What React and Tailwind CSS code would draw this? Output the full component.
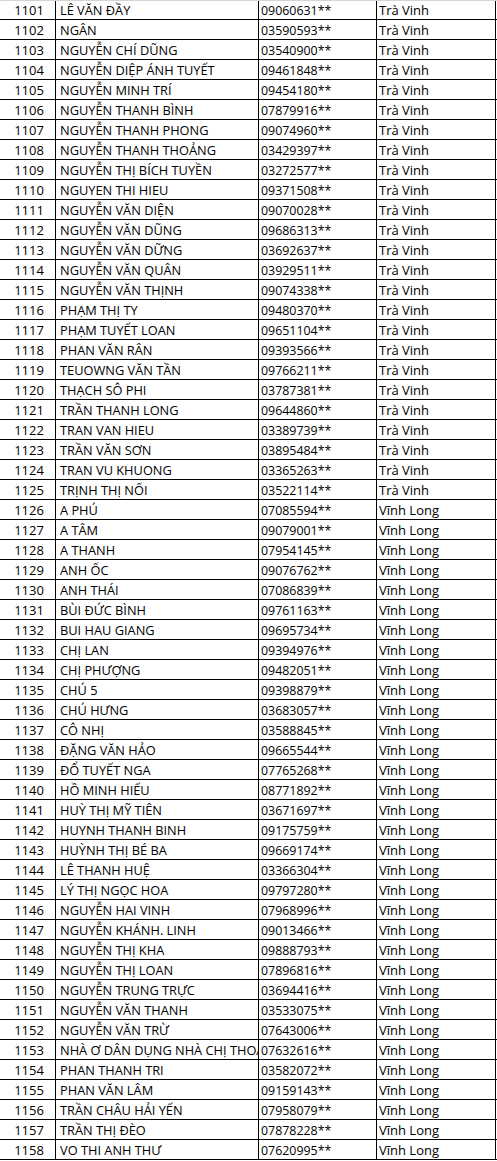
import React from "react";

const raw = `1101|LÊ VĂN ĐẦY|09060631
1102|NGÂN|03590593
1103|NGUYỄN CHÍ DŨNG|03540900
1104|NGUYỄN DIỆP ÁNH TUYẾT|09461848
1105|NGUYỄN MINH TRÍ|09454180
1106|NGUYỄN THANH BÌNH|07879916
1107|NGUYỄN THANH PHONG|09074960
1108|NGUYỄN THANH THOẢNG|03429397
1109|NGUYỄN THỊ BÍCH TUYỀN|03272577
1110|NGUYEN THI HIEU|09371508
1111|NGUYỄN VĂN DIỆN|09070028
1112|NGUYỄN VĂN DŨNG|09686313
1113|NGUYỄN VĂN DỮNG|03692637
1114|NGUYỄN VĂN QUÂN|03929511
1115|NGUYỄN VĂN THỊNH|09074338
1116|PHẠM THỊ TY|09480370
1117|PHẠM TUYẾT LOAN|09651104
1118|PHAN VĂN RÂN|09393566
1119|TEUOWNG VĂN TẦN|09766211
1120|THẠCH SÔ PHI|03787381
1121|TRẦN THANH LONG|09644860
1122|TRAN VAN HIEU|03389739
1123|TRẦN VĂN SƠN|03895484
1124|TRAN VU KHUONG|03365263
1125|TRỊNH THỊ NỐI|03522114
1126|A PHÚ|07085594
1127|A TÂM|09079001
1128|A THANH|07954145
1129|ANH ỐC|09076762
1130|ANH THÁI|07086839
1131|BÙI ĐỨC BÌNH|09761163
1132|BUI HAU GIANG|09695734
1133|CHỊ LAN|09394976
1134|CHỊ PHƯỢNG|09482051
1135|CHÚ 5|09398879
1136|CHÚ HƯNG|03683057
1137|CÔ NHỊ|03588845
1138|ĐẶNG VĂN HẢO|09665544
1139|ĐỔ TUYẾT NGA|07765268
1140|HỒ MINH HIẾU|08771892
1141|HUỲ THỊ MỸ TIÊN|03671697
1142|HUYNH THANH BINH|09175759
1143|HUỲNH THỊ BÉ BA|09669174
1144|LÊ THANH HUỆ|03366304
1145|LÝ THỊ NGỌC HOA|09797280
1146|NGUYỄN HAI VINH|07968996
1147|NGUYỄN KHÁNH. LINH|09013466
1148|NGUYỄN THỊ KHA|09888793
1149|NGUYỄN THỊ LOAN|07896816
1150|NGUYỄN TRUNG TRỰC|03694416
1151|NGUYỄN VĂN THANH|03533075
1152|NGUYỄN VĂN TRỪ|07643006
1153|NHÀ Ơ DÂN DỤNG NHÀ CHỊ THOẠI|07632616
1154|PHAN THANH TRI|03582072
1155|PHAN VĂN LÂM|09159143
1156|TRẦN CHÂU HẢI YẾN|07958079
1157|TRẦN THỊ ĐÈO|07878228
1158|VO THI ANH THƯ|07620995`;

const rows = raw.split("\n").map((l) => {
  const [id, name, phone] = l.split("|");
  return { id, name, phone: phone + "**", place: Number(id) <= 1125 ? "Trà Vinh" : "Vĩnh Long" };
});

export default function App() {
  return (
    <div
      className="w-[497px] bg-white text-black leading-none border-t border-[#d4d4d4]"
      style={{ fontFamily: '"Open Sans", "Noto Sans", sans-serif' }}
    >
      {rows.map((r, i) => (
        <div
          key={r.id}
          className={
            i === 0
              ? "flex h-[19px] border-b border-black"
              : "flex h-[20px] border-b border-black"
          }
        >
          <div className="w-[56px] shrink-0 border-r border-black flex items-end justify-center pb-[2px] pl-[3px] text-[13px]">
            {r.id}
          </div>
          <div className="w-[203px] shrink-0 border-r border-black flex items-end pb-[2px] pl-[4px] overflow-hidden whitespace-nowrap text-[12.8px]">
            {r.name}
          </div>
          <div className="w-[118px] shrink-0 border-r border-black flex items-end pb-[2px] pl-[2px] whitespace-nowrap text-[12.4px]">
            {r.phone}
          </div>
          <div className="w-[119px] shrink-0 border-r border-black flex items-end pb-[2px] pl-[2px] whitespace-nowrap text-[13px]">
            {r.place}
          </div>
        </div>
      ))}
    </div>
  );
}
